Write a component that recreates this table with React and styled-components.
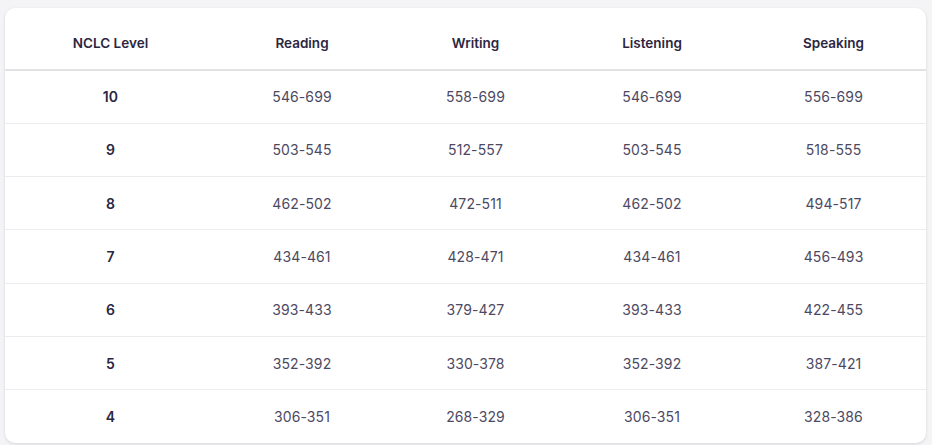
import React from "react";
import styled, { createGlobalStyle } from "styled-components";

const Global = createGlobalStyle`
  html, body { margin: 0; padding: 0; background: #f4f4f6; }
  body { font-family: Inter, "Noto Sans", sans-serif; }
`;

const Page = styled.div`
  padding: 8px 6px 4px 5px;
`;

const Card = styled.div`
  background: #ffffff;
  border-radius: 10px;
  box-shadow: 0 1px 3px rgba(30, 30, 60, 0.14);
  overflow: hidden;
`;

const Table = styled.table`
  width: 100%;
  border-collapse: collapse;
  table-layout: fixed;
`;

const HeadCell = styled.th`
  height: 62px;
  padding: 9px 0 0 0;
  box-sizing: border-box;
  font-size: 13.5px;
  font-weight: 600;
  color: #2b2641;
  text-align: center;
  border-bottom: 2px solid #e2e2e5;
`;

const Row = styled.tr`
  height: 53.3px;
  border-bottom: ${(p) => (p.$last ? "none" : "1px solid #ececef")};
`;

const Cell = styled.td`
  padding: 0;
  text-align: center;
  font-size: 14px;
  font-weight: ${(p) => (p.$strong ? 600 : 400)};
  color: ${(p) => (p.$strong ? "#2b2641" : "#4d4962")};
  letter-spacing: 0.1px;
`;

const widths = [211, 172, 175, 178, 185];
const headers = ["NCLC Level", "Reading", "Writing", "Listening", "Speaking"];
const rows = [
  ["10", "546-699", "558-699", "546-699", "556-699"],
  ["9", "503-545", "512-557", "503-545", "518-555"],
  ["8", "462-502", "472-511", "462-502", "494-517"],
  ["7", "434-461", "428-471", "434-461", "456-493"],
  ["6", "393-433", "379-427", "393-433", "422-455"],
  ["5", "352-392", "330-378", "352-392", "387-421"],
  ["4", "306-351", "268-329", "306-351", "328-386"],
];

export default function App() {
  return (
    <Page>
      <Global />
      <Card>
        <Table>
          <colgroup>
            {widths.map((w, i) => (
              <col key={i} style={{ width: w }} />
            ))}
          </colgroup>
          <thead>
            <tr>
              {headers.map((h) => (
                <HeadCell key={h}>{h}</HeadCell>
              ))}
            </tr>
          </thead>
          <tbody>
            {rows.map((r, i) => (
              <Row key={r[0]} $last={i === rows.length - 1}>
                {r.map((c, j) => (
                  <Cell key={j} $strong={j === 0}>
                    {c}
                  </Cell>
                ))}
              </Row>
            ))}
          </tbody>
        </Table>
      </Card>
    </Page>
  );
}
